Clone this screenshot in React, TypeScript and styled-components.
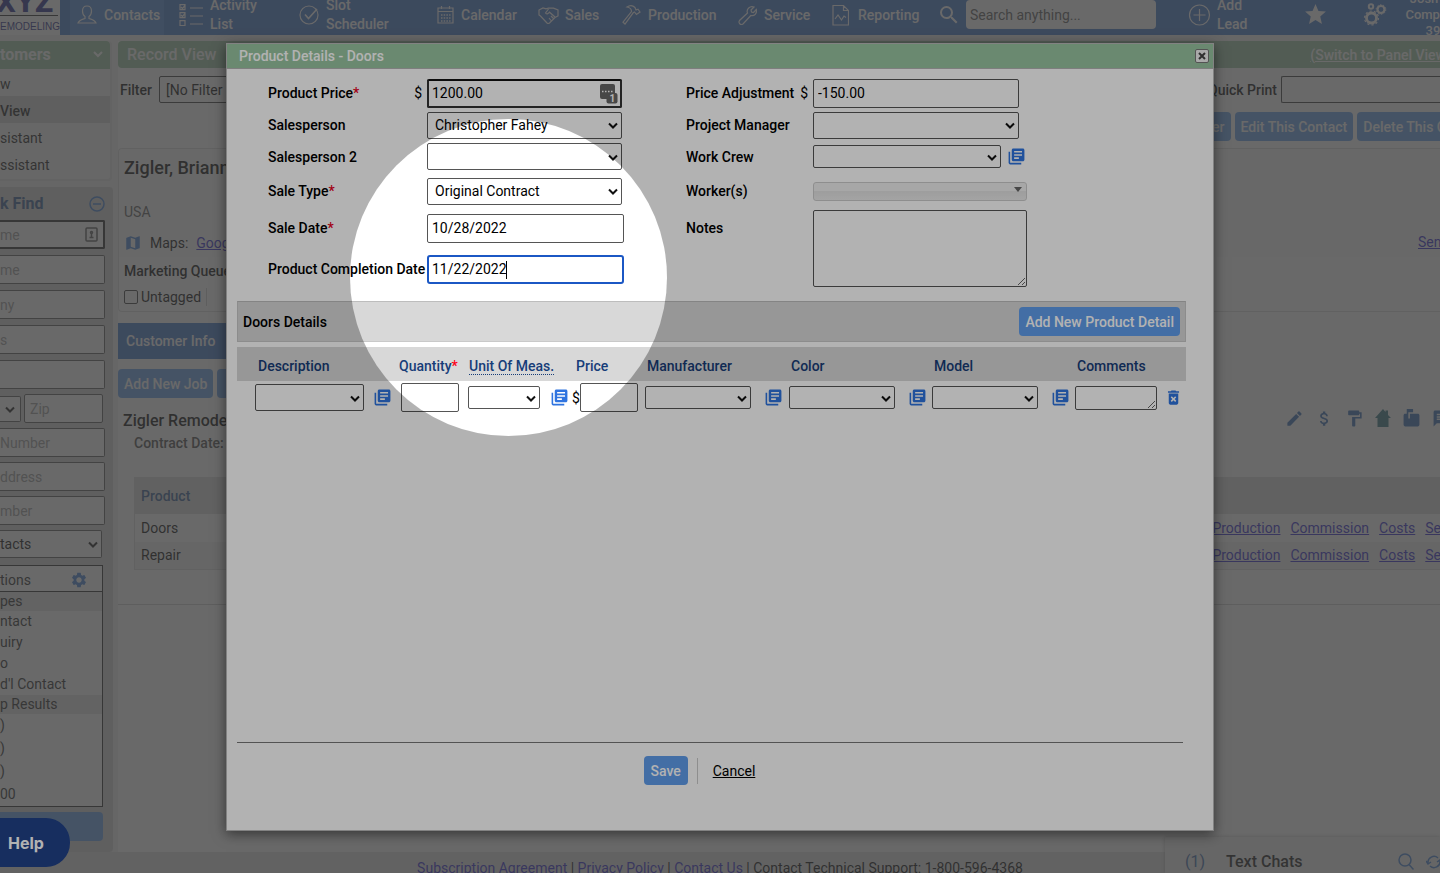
import React from "react";
import styled, { createGlobalStyle, css } from "styled-components";
import {
  MdAttachMoney,
  MdDeleteForever,
  MdEdit,
  MdFormatPaint,
  MdLibraryBooks,
  MdMap,
  MdMarkunreadMailbox,
  MdMessage,
  MdSearch,
  MdSettings,
  MdStar,
} from "react-icons/md";

const GlobalStyle = createGlobalStyle`
  *, *::before, *::after { box-sizing: border-box; }
  body {
    margin: 0;
    background: #efefef;
    color: #000;
    font-family: Roboto, "Liberation Sans", sans-serif;
    font-size: 14px;
    line-height: 18px;
  }
  button, input, select, textarea { font: inherit; color: inherit; margin: 0; }
  svg { display: block; flex: none; }
`;

const Shell = styled.div`
  position: relative;
  height: 100vh;
  overflow: hidden;
`;

/* ---------- top navigation ---------- */

const TopBar = styled.header`
  display: flex;
  align-items: flex-start;
  height: 35px;
  background: #3873cb;
  color: #fff;
  overflow: hidden;
`;

const Logo = styled.a`
  display: flex;
  flex: none;
  width: 60px;
  height: 35px;
  margin-right: 10px;
  background: #fff;
`;

const NavList = styled.nav`
  display: flex;
  flex: none;
  gap: 8px;
`;

const NavItem = styled.a<{ $width: number; $active?: boolean; $gap?: number }>`
  display: flex;
  flex: none;
  align-items: center;
  gap: ${(p) => p.$gap ?? 7}px;
  width: ${(p) => p.$width}px;
  height: 35px;
  padding: 0 0 5px 7px;
  background: ${(p) => (p.$active ? "#4a85d8" : "transparent")};
  color: inherit;
  font-weight: 500;
  line-height: 19px;
  text-decoration: none;
`;

const SearchBox = styled.form`
  display: flex;
  flex: none;
  gap: 5px;
  height: 29px;
  margin-left: 12px;
  align-items: center;
  input {
    width: 190px;
    height: 29px;
    padding: 0 4px;
    border: 0;
    border-radius: 4px;
    background: #fff;
  }
  input::placeholder { color: #555; opacity: 1; }
`;

const TopTools = styled.div`
  display: flex;
  flex: none;
  align-items: center;
  width: 252px;
  height: 29px;
  margin-left: auto;
  font-weight: 500;
  line-height: 19px;
  a {
    display: flex;
    align-items: center;
    gap: 6px;
    color: inherit;
    text-decoration: none;
  }
`;

const ToolSlot = styled.div<{ $width: number }>`
  flex: none;
  width: ${(p) => p.$width}px;
`;

const UserInfo = styled.div`
  flex: none;
  width: 60px;
  font-size: 13px;
  line-height: 16px;
  text-align: center;
`;

/* ---------- sidebar ---------- */

const Columns = styled.div`
  display: flex;
  align-items: flex-start;
  padding-top: 6px;
`;

const Sidebar = styled.aside`
  flex: none;
  width: 113px;
  margin-right: 5px;
`;

const SideMenu = styled.section`
  width: 112px;
  height: 140px;
  margin-bottom: 6px;
  background: #f6f6f6;
  border: 1px solid #e2e2e2;
  border-width: 0 2px 2px 0;
  border-radius: 0 4px 4px 0;
`;

const SideHeading = styled.h2`
  display: flex;
  align-items: center;
  justify-content: space-between;
  height: 28px;
  margin: 0;
  padding-right: 5px;
  border-radius: 0 4px 0 0;
  background: #99c5a1;
  color: #fff;
  font-size: 16px;
  font-weight: 700;
`;

const SideLink = styled.a<{ $selected?: boolean }>`
  display: flex;
  align-items: center;
  height: 27px;
  padding-top: 3px;
  background: ${(p) => (p.$selected ? "#d2d2d2" : "transparent")};
  color: #111;
  font-weight: ${(p) => (p.$selected ? 500 : 400)};
  text-decoration: none;
`;

const QuickFind = styled.section`
  height: 665px;
  padding-right: 8px;
  border-radius: 0 4px 4px 0;
  background: #d2d2d2;
`;

const QuickFindTitle = styled.h2`
  display: flex;
  align-items: center;
  justify-content: space-between;
  height: 33px;
  margin: 0;
  color: #2d568f;
  font-size: 16px;
  font-weight: 700;
`;

const FieldStack = styled.div<{ $gap: number }>`
  display: flex;
  flex-direction: column;
  gap: ${(p) => p.$gap}px;
  margin-bottom: 5px;
`;

const SideInput = styled.input<{ $strong?: boolean }>`
  width: 100%;
  height: 29px;
  padding: 0 4px 0 0;
  border: ${(p) => (p.$strong ? "2px solid #222" : "1px solid #555")};
  border-left: 0;
  border-radius: 0 2px 2px 0;
  background: #fff;
  &::placeholder { color: #999; opacity: 1; }
`;

const InputWithMark = styled.div`
  position: relative;
  svg { position: absolute; right: 7px; top: 7px; }
`;

const ZipRow = styled.div`
  display: grid;
  grid-template-columns: 19px 79px;
  gap: 5px;
  align-items: center;
  input { border-left: 1px solid #555; border-radius: 2px; padding-left: 5px; }
`;

const ResultsBox = styled.div`
  width: 103px;
  height: 242px;
  margin: 7px 0 5px;
  border: 1px solid #222;
  border-left: 0;
  background: #fff;
  color: #222;
`;

const ResultsTitle = styled.div`
  display: flex;
  align-items: center;
  justify-content: space-between;
  height: 26px;
  padding: 3px 14px 0 0;
  border-bottom: 1px solid #222;
`;

const ResultRow = styled.div<{ $band?: boolean; $tall?: boolean }>`
  height: ${(p) => (p.$band ? 19 : p.$tall ? 23 : 21)}px;
  line-height: ${(p) => (p.$band ? 19 : p.$tall ? 23 : 21)}px;
  background: ${(p) => (p.$band ? "#e4e4e4" : "transparent")};
`;

const SideAction = styled.button`
  display: block;
  width: 103px;
  height: 29px;
  border: 0;
  border-radius: 0 4px 4px 0;
  background: #619eec;
`;

/* ---------- record page ---------- */

const Record = styled.main`
  flex: 1;
  min-width: 0;
  height: 811px;
  overflow: hidden;
  background: #fff;
  white-space: nowrap;
`;

const RecordBar = styled.div`
  display: flex;
  align-items: center;
  justify-content: space-between;
  height: 27px;
  padding-left: 9px;
  border-radius: 4px 0 0 4px;
  background: #99c5a1;
  color: #fff;
  h1 { margin: 0; font-size: 16px; font-weight: 500; }
  a { margin-right: -6px; color: inherit; font-weight: 500; }
`;

const FilterRow = styled.div`
  display: flex;
  align-items: center;
  justify-content: space-between;
  height: 43px;
  margin-bottom: 1px;
  padding-left: 2px;
  font-weight: 500;
`;

const Labelled = styled.label`
  display: flex;
  align-items: center;
  gap: 7px;
`;

const FilterSelect = styled.select`
  appearance: none;
  width: 160px;
  height: 27px;
  padding: 0 6px;
  border: 1px solid #333;
  border-radius: 2px;
  background: #fff;
  font-weight: 400;
`;

const PrintBox = styled(Labelled)`
  gap: 4px;
  input {
    width: 159px;
    height: 27px;
    border: 1px solid #333;
    border-right: 0;
    border-radius: 2px 0 0 2px;
    background: #fff;
  }
`;

const ActionRow = styled.div<{ $end?: boolean }>`
  display: flex;
  justify-content: ${(p) => (p.$end ? "flex-end" : "flex-start")};
  gap: 4px;
`;

const PillButton = styled.button<{ $cut?: boolean }>`
  flex: none;
  min-width: 44px;
  height: 29px;
  padding: 0 6px;
  border: 0;
  border-radius: 4px;
  background: #619eec;
  color: #fff;
  font-weight: 500;
  text-align: center;
  ${(p) => p.$cut && "margin-right: -12px;"}
`;

const ContactCard = styled.section`
  display: flex;
  justify-content: space-between;
  height: 164px;
  margin: 7px 0 11px;
  padding: 9px 0 0 5px;
  border: 1px solid #ddd;
  border-right: 0;
  border-radius: 4px 0 0 4px;
  background: linear-gradient(#fafafa 108px, #fff 108px);
  h2 { margin: 0; font-size: 18px; line-height: 20px; font-weight: 500; }
`;

const CardLine = styled.div<{ $height: number; $muted?: boolean; $bold?: boolean }>`
  display: flex;
  align-items: center;
  gap: 8px;
  height: ${(p) => p.$height}px;
  padding-top: ${(p) => (p.$muted ? 18 : 0)}px;
  color: ${(p) => (p.$muted ? "#555" : "#000")};
  font-weight: ${(p) => (p.$bold ? 500 : 400)};
`;

const TextLink = styled.a`
  color: #2a22cc;
`;

const CardSide = styled.div`
  width: 22px;
  padding-top: 75px;
`;

const TagLabel = styled.label`
  display: flex;
  align-items: center;
  gap: 3px;
  padding-right: 5px;
  border-right: 1px solid #ccc;
  input {
    appearance: none;
    width: 14px;
    height: 14px;
    border: 1px solid #333;
    border-radius: 2px;
  }
`;

const InfoTab = styled.button`
  display: block;
  width: 160px;
  height: 36px;
  margin-bottom: 10px;
  padding: 0 8px;
  border: 0;
  background: #3873cb;
  color: #fff;
  font-weight: 500;
  text-align: left;
`;

const JobHead = styled.div`
  display: flex;
  justify-content: space-between;
  height: 79px;
  padding: 10px 0 0 5px;
  h3 { margin: 3px 0 0; font-size: 16px; line-height: 20px; font-weight: 500; }
  p { margin: 3px 0 0 11px; color: #444; font-weight: 500; }
`;

const JobIcons = styled.div`
  display: flex;
  justify-content: space-between;
  align-items: center;
  width: 166px;
  height: 20px;
  margin-right: -11px;
  color: #2c66b4;
`;

const JobTable = styled.table`
  width: calc(100% - 16px);
  margin-left: 16px;
  border-collapse: collapse;
  border: 1px solid #ddd;
  border-right: 0;
  th, td { padding: 0 0 0 6px; text-align: left; }
  th { height: 36px; background: #dedede; color: #2d568f; font-weight: 500; }
  td { height: 28px; }
  tr:nth-child(2) td { background: #f3f3f3; }
`;

const RowLinks = styled.div`
  display: flex;
  justify-content: flex-end;
  gap: 10px;
  margin-right: -1px;
`;

const Rule = styled.hr`
  margin: 34px 0 0;
  border: 0;
  border-top: 1px solid #ccc;
`;

const Footer = styled.footer`
  height: 40px;
  padding-top: 7px;
  background: #e0e0e0;
  text-align: center;
`;

const ChatBar = styled.aside`
  position: absolute;
  right: 0;
  bottom: 0;
  display: flex;
  align-items: center;
  width: 275px;
  height: 36px;
  padding: 13px 0 0 20px;
  background: #f2f2f2;
  box-shadow: 0 0 4px rgba(0, 0, 0, 0.3);
  color: #3565a8;
  font-size: 16px;
  strong { flex: 1; margin-left: 21px; color: #111; font-weight: 500; }
  svg + svg { margin: 0 -2px 0 12px; }
`;

/* ---------- overlays ---------- */

const Backdrop = styled.div`
  position: absolute;
  inset: 0;
  background: rgba(102, 102, 102, 0.68);
`;

const HelpButton = styled.button`
  position: absolute;
  left: 0;
  bottom: 6px;
  width: 70px;
  height: 49px;
  padding: 0 0 0 8px;
  border: 0;
  border-radius: 0 24px 24px 0;
  background: #214289;
  color: #fff;
  font-family: Inter, Roboto, sans-serif;
  font-size: 16px;
  font-weight: 700;
  text-align: left;
`;

const Spotlight = styled.div`
  position: absolute;
  left: 350px;
  top: 119px;
  width: 317px;
  height: 317px;
  border-radius: 50%;
  box-shadow: 0 0 0 2000px rgba(0, 0, 0, 0.3);
  pointer-events: none;
`;

/* ---------- dialog ---------- */

const Dialog = styled.section`
  position: absolute;
  top: 43px;
  right: 226px;
  bottom: 42px;
  left: 226px;
  display: flex;
  flex-direction: column;
  border: 1px solid #bbb;
  background: #fff;
  box-shadow: 0 3px 12px rgba(0, 0, 0, 0.5);
`;

const DialogBar = styled.header`
  display: flex;
  align-items: center;
  justify-content: space-between;
  height: 25px;
  padding: 0 4px 0 12px;
  border-bottom: 1px solid #b5b5b5;
  background: #99c5a1;
  color: #fff;
  h2 { margin: 0; font-size: 14px; font-weight: 500; }
`;

const CloseButton = styled.button`
  display: grid;
  place-items: center;
  width: 14px;
  height: 14px;
  padding: 0;
  border: 1px solid #777;
  border-radius: 2px;
  background: #f2f2f2;
`;

const DialogBody = styled.form`
  display: flex;
  flex: 1;
  flex-direction: column;
  padding: 8px 27px 45px 10px;
`;

const FormGrid = styled.div`
  display: grid;
  grid-template-columns: 159px 259px 127px 1fr;
  grid-template-rows: 32px 32px 31px 38px 36px 46px;
  align-items: center;
  margin-bottom: 9px;
  padding-left: 31px;
`;

const Label = styled.label`
  display: flex;
  justify-content: space-between;
  padding-right: 5px;
  font-weight: 500;
  white-space: nowrap;
  b { font-weight: 500; }
  i { color: #e8001c; font-style: normal; }
  span { font-weight: 400; }
`;

const Control = styled.div`
  display: flex;
  align-items: center;
  gap: 6px;
`;

const boxed = css`
  border: 1px solid #555;
  border-radius: 2px;
  background: transparent;
  outline: 0;
`;

const TextInput = styled.input<{ $width: number; $look?: "strong" | "focus" }>`
  ${boxed}
  width: ${(p) => p.$width}px;
  height: 29px;
  padding: 0 4px;
  ${(p) => p.$look === "strong" && "border: 2px solid #333; border-top-color: #111; padding: 0 3px;"}
  ${(p) => p.$look === "focus" && "border: 2px solid #1b57c4; border-radius: 3px; padding: 0 3px;"}
`;

const Layered = styled.div`
  position: relative;
`;

const ManagerMark = styled.svg`
  position: absolute;
  top: 5px;
  right: 4px;
`;

const Caret = styled.span`
  position: absolute;
  top: 6px;
  left: 79px;
  width: 1px;
  height: 18px;
  background: #000;
`;

const SelectWrap = styled.span<{ $width: number }>`
  position: relative;
  display: block;
  flex: none;
  width: ${(p) => p.$width}px;
  svg { position: absolute; top: 50%; right: 3px; margin-top: -3px; pointer-events: none; }
`;

const SelectBox = styled.select<{ $height: number }>`
  ${boxed}
  appearance: none;
  display: block;
  width: 100%;
  height: ${(p) => p.$height}px;
  padding: 0 20px 0 7px;
`;

const SideSelectWrap = styled(SelectWrap)`
  select { border-left: 0; border-radius: 0 2px 2px 0; padding-left: 0; background: #fff; }
`;

const WorkerPicker = styled.button`
  display: flex;
  justify-content: flex-end;
  width: 214px;
  height: 19px;
  padding: 4px 4px 0 0;
  border: 1px solid #ccc;
  border-radius: 3px;
  background: linear-gradient(#f0f0f0 50%, #e2e2e2 50%, #ebebeb);
`;

const NotesCell = styled.div`
  grid-row: 5 / span 2;
  grid-column: 4;
  align-self: start;
`;

const Area = styled.textarea<{ $width: number; $height: number }>`
  ${boxed}
  display: block;
  width: ${(p) => p.$width}px;
  height: ${(p) => p.$height}px;
  padding: 2px 4px;
  resize: both;
`;

const IconButton = styled.button`
  flex: none;
  padding: 0;
  border: 0;
  background: transparent;
  color: #2f74e0;
`;

const DetailsBar = styled.div`
  display: flex;
  align-items: center;
  justify-content: space-between;
  height: 41px;
  margin-bottom: 5px;
  padding: 0 5px;
  border: 1px solid #c9c9c9;
  border-top-color: #bdbdbd;
  background: #d8d8d8;
  h3 { margin: 0; font-size: 14px; font-weight: 500; }
`;

const DetailTable = styled.table`
  width: 100%;
  table-layout: fixed;
  border-collapse: collapse;
  th, td { padding: 0; text-align: left; white-space: nowrap; }
  th {
    height: 34px;
    padding: 3px 0 0 4px;
    background: #d8d8d8;
    color: #173d78;
    font-weight: 500;
  }
  th:nth-child(2) { padding-left: 0; }
  th:nth-child(3) { padding-left: 3px; }
  td { height: 33px; padding-left: 2px; }
  th:first-child { padding-left: 21px; }
  td:first-child { padding-left: 18px; }
  td:nth-child(4) { padding-left: 0; }
  th i { color: #ff0018; font-style: normal; }
  abbr { text-decoration: none; border-bottom: 1px dotted #173d78; }
`;

const Spread = styled.div<{ $gap?: number }>`
  display: flex;
  align-items: center;
  gap: ${(p) => p.$gap ?? 14}px;
`;

const FooterRule = styled.hr`
  width: calc(100% - 3px);
  margin: auto 3px 0 0;
  border: 0;
  border-top: 1px solid #777;
`;

const DialogFooter = styled.footer`
  display: flex;
  align-items: center;
  justify-content: center;
  gap: 9px;
  padding: 13px 24px 0 0;
`;

const CancelLink = styled.a`
  padding: 4px 0 4px 15px;
  border-left: 1px solid #ccc;
  color: #000;
`;

const Chevron = () => (
  <svg width="12" height="8" viewBox="0 0 12 8" fill="none" stroke="#111" strokeWidth="2">
    <path d="M2 1.500l4 4 4-4" />
  </svg>
);

const Line = ({ size = 20, children }: { size?: number; children: React.ReactNode }) => (
  <svg width={size} height="22" viewBox={`0 0 ${size} 22`} fill="none" stroke="#fff" strokeWidth="1.2">
    {children}
  </svg>
);

function Picker({ label, id, width, height = 27, options = [""] }: {
  label?: string; id?: string; width: number; height?: number; options?: string[];
}) {
  return (
    <SelectWrap $width={width}>
      <SelectBox id={id} aria-label={label} $height={height}>
        {options.map((o) => <option key={o}>{o}</option>)}
      </SelectBox>
      <Chevron />
    </SelectWrap>
  );
}

const Library = ({ label }: { label: string }) => (
  <IconButton type="button" aria-label={label}><MdLibraryBooks size={19} /></IconButton>
);

function Navigation() {
  return (
    <TopBar>
      <Logo href="#home" aria-label="XYZ Remodeling">
        <svg width="60" height="35" viewBox="0 0 60 35" fill="#1c1f86">
          <text x="-4" y="12" fontFamily="DejaVu Sans" fontWeight="700" fontSize="26">XYZ</text>
          <path d="M0 15.500H58" stroke="#222" strokeWidth="1" />
          <text x="0" y="30" fontFamily="Liberation Sans" fontSize="10">EMODELING</text>
        </svg>
      </Logo>
      <NavList>
        <NavItem href="#contacts" $width={94} $active>
          <Line><path d="M10 2c3 0 4.500 2 4.500 5 0 2.500-1 4.500-2.500 5.500v2c3 1 6 1.500 7 4.500H1c1-3 4-3.500 7-4.500v-2C6.500 11.500 5.500 9.500 5.500 7 5.500 4 7 2 10 2z" /></Line>
          Contacts
        </NavItem>
        <NavItem href="#activity" $width={112}>
          <Line size={24}>
            <path d="M1 0.600h5v5H1zM1 8.600h5v5H1zM1 16.600h5v5H1zM2 3l1.500 1.500L6 1.500M2 11l1.500 1.500L6 9.500M11 4h13M11 12h13M11 20h13" />
          </Line>
          <span>Activity<br />List</span>
        </NavItem>
        <NavItem href="#slots" $width={130}>
          <Line><circle cx="10" cy="11" r="9" /><path d="M6 10.500l3.500 4L18 5" strokeWidth="1.600" /></Line>
          <span>Slot<br />Scheduler</span>
        </NavItem>
        <NavItem href="#calendar" $width={93}>
          <Line size={17}>
            <path d="M1 4h15v15H1zM1 7.500h15M4.500 2v3M12.500 2v3" />
            <path d="M4 11h9.500M4 14h9.500M4 17h9.500" strokeDasharray="1.500 1.200" strokeWidth="1.500" />
          </Line>
          Calendar
        </NavItem>
        <NavItem href="#sales" $width={76} $gap={6}>
          <Line size={21}>
            <path d="M1 6l4-2 3 .8 2.500-.8 5 .2L20 6v6l-3 1.500-5.500 5.500c-.8.600-1.800.600-2.500 0L2.500 12 1 11zM10.500 5L7.500 9c1 1.500 2.500 1 4-.8L17 13M13 12l2.500 2.500M11 14l2 2.500" />
          </Line>
          Sales
        </NavItem>
        <NavItem href="#production" $width={108}>
          <Line size={19}>
            <path d="M5 3c3-2 6-1.500 8 .5l1 2.500 2-.8 2 2.800-3.500 2.500-2-2.500-1.300.8L3 20l-2-1.800L9.500 7.500C9.500 5 8 3.500 5 3z" />
          </Line>
          Production
        </NavItem>
        <NavItem href="#service" $width={86}>
          <Line size={19}>
            <path d="M16 3l-3 3 .5 2 2 .5 2.800-3c1 4-2 7-5.500 6L5 20c-2.500 1.500-5-1-3.500-3.500L9.500 9C8 5 12 1.500 16 3z" />
          </Line>
          Service
        </NavItem>
        <NavItem href="#reporting" $width={100} $gap={9}>
          <Line size={17}>
            <path d="M1 1.500h10.500l5 5V21H1zM11.500 1.500v5h5M3 15l3-4 3.500 5 2.500-4 2 1.500" />
          </Line>
          Reporting
        </NavItem>
      </NavList>
      <SearchBox>
        <MdSearch size={24} />
        <input type="search" aria-label="Search" placeholder="Search anything..." />
      </SearchBox>
      <TopTools>
        <ToolSlot $width={115}>
          <a href="#lead">
            <Line size={23}><circle cx="11.500" cy="11" r="10" /><path d="M11.500 5v12M5.500 11h12" /></Line>
            <span>Add<br />Lead</span>
          </a>
        </ToolSlot>
        <ToolSlot $width={60}><a href="#favorites" aria-label="Favorites"><MdStar size={25} /></a></ToolSlot>
        <ToolSlot $width={40}>
          <a href="#settings" aria-label="Settings">
            <svg width="24" height="24" viewBox="0 0 24 24" fill="none" stroke="#fff">
              <circle cx="8.500" cy="15" r="5" strokeWidth="2.800" />
              <circle cx="8.500" cy="15" r="7" strokeWidth="1.200" strokeDasharray="2.200 2.200" />
              <circle cx="18" cy="6.500" r="3.500" strokeWidth="2.200" />
              <circle cx="18" cy="6.500" r="4.800" strokeWidth="1" strokeDasharray="1.500 1.500" />
              <circle cx="8" cy="3.500" r="2.200" strokeWidth="2" />
            </svg>
          </a>
        </ToolSlot>
        <UserInfo>Josh Jo<br />Company<br />39</UserInfo>
      </TopTools>
    </TopBar>
  );
}

function SidePanel() {
  return (
    <Sidebar>
      <SideMenu>
        <SideHeading>
          tomers
          <svg width="14" height="10" viewBox="0 0 14 10" fill="none" stroke="#fff" strokeWidth="2"><path d="M3 2l4 4 4-4" /></svg>
        </SideHeading>
        <SideLink href="#new">w</SideLink>
        <SideLink href="#view" $selected>View</SideLink>
        <SideLink href="#assistant">sistant</SideLink>
        <SideLink href="#assistant2">ssistant</SideLink>
      </SideMenu>
      <QuickFind>
        <QuickFindTitle>
          k Find
          <svg width="16" height="16" viewBox="0 0 16 16" fill="none" stroke="#3f7fd6" strokeWidth="1.500"><circle cx="8" cy="8" r="7" /><path d="M4 8h8" /></svg>
        </QuickFindTitle>
        <FieldStack $gap={6}>
          <InputWithMark>
            <SideInput aria-label="First name" placeholder="me" $strong />
            <svg width="13" height="15" viewBox="0 0 13 15" fill="none" stroke="#555" strokeWidth="1.500"><rect x="1" y="1" width="11" height="13" rx="1" /><circle cx="6.500" cy="5.500" r="1" /><path d="M4.500 10.500h4M6.500 7v3" /></svg>
          </InputWithMark>
          <SideInput aria-label="Last name" placeholder="me" />
          <SideInput aria-label="Company" placeholder="ny" />
          <SideInput aria-label="Address" placeholder="s" />
          <SideInput aria-label="City" />
        </FieldStack>
        <FieldStack $gap={5}>
          <ZipRow>
            <SideSelectWrap $width={19}><SelectBox aria-label="State" $height={26}><option /></SelectBox><Chevron /></SideSelectWrap>
            <SideInput aria-label="Zip" placeholder="Zip" />
          </ZipRow>
          <SideInput aria-label="Phone" placeholder="Number" />
          <SideInput aria-label="Email" placeholder="ddress" />
          <SideInput aria-label="Job" placeholder="mber" />
          <SideSelectWrap $width={102}>
            <SelectBox aria-label="Contacts" $height={28}><option>tacts</option></SelectBox><Chevron />
          </SideSelectWrap>
        </FieldStack>
        <ResultsBox>
          <ResultsTitle>tions <MdSettings size={18} color="#3f7fd6" /></ResultsTitle>
          <ResultRow $band>pes</ResultRow>
          <ResultRow>ntact</ResultRow>
          <ResultRow>uiry</ResultRow>
          <ResultRow>o</ResultRow>
          <ResultRow>d'l Contact</ResultRow>
          <ResultRow $band>p Results</ResultRow>
          <ResultRow $tall>)</ResultRow>
          <ResultRow $tall>)</ResultRow>
          <ResultRow $tall>)</ResultRow>
          <ResultRow $tall>00</ResultRow>
        </ResultsBox>
        <SideAction aria-label="Search" />
      </QuickFind>
    </Sidebar>
  );
}

function RecordPage() {
  return (
    <Record>
      <RecordBar>
        <h1>Record View</h1>
        <a href="#panel">(Switch to Panel View</a>
      </RecordBar>
      <FilterRow>
        <Labelled>Filter<FilterSelect><option>[No Filter</option></FilterSelect></Labelled>
        <PrintBox>Quick Print<input type="text" /></PrintBox>
      </FilterRow>
      <ActionRow $end>
        <PillButton>Filter</PillButton>
        <PillButton>Edit This Contact</PillButton>
        <PillButton $cut>Delete This C</PillButton>
      </ActionRow>
      <ContactCard>
        <div>
          <h2>Zigler, Brianna</h2>
          <CardLine $height={50} $muted>USA</CardLine>
          <CardLine $height={30}>
            <MdMap size={18} color="#3f7fd6" />Maps: <TextLink href="#maps">Google</TextLink>
          </CardLine>
          <CardLine $height={26} $bold>Marketing Queue</CardLine>
          <CardLine $height={25}><TagLabel><input type="checkbox" />Untagged</TagLabel></CardLine>
        </div>
        <CardSide><TextLink href="#send">Sen</TextLink></CardSide>
      </ContactCard>
      <InfoTab>Customer Info</InfoTab>
      <ActionRow><PillButton>Add New Job</PillButton><PillButton>Add</PillButton></ActionRow>
      <JobHead>
        <div><h3>Zigler Remodel</h3><p>Contract Date:</p></div>
        <JobIcons>
          <MdEdit size={19} /><MdAttachMoney size={19} /><MdFormatPaint size={19} />
          <svg width="16" height="18" viewBox="0 0 16 18" fill="#2f7080"><path d="M8 0L10.500 3V1.500H13V6L16 9h-2.500v9h-11V9H0z" /></svg>
          <MdMarkunreadMailbox size={19} /><MdMessage size={19} />
        </JobIcons>
      </JobHead>
      <JobTable>
        <thead><tr><th>Product</th><th /></tr></thead>
        <tbody>
          {["Doors", "Repair"].map((name) => (
            <tr key={name}>
              <td>{name}</td>
              <td>
                <RowLinks>
                  <TextLink href="#production">Production</TextLink>
                  <TextLink href="#commission">Commission</TextLink>
                  <TextLink href="#costs">Costs</TextLink>
                  <TextLink href="#service">Se</TextLink>
                </RowLinks>
              </td>
            </tr>
          ))}
        </tbody>
      </JobTable>
      <Rule />
    </Record>
  );
}

function ProductDialog() {
  return (
    <Dialog role="dialog" aria-labelledby="dialog-title">
      <DialogBar>
        <h2 id="dialog-title">Product Details - Doors</h2>
        <CloseButton aria-label="Close">
          <svg width="8" height="8" viewBox="0 0 8 8" stroke="#444" strokeWidth="2"><path d="M1 1l6 6M7 1L1 7" /></svg>
        </CloseButton>
      </DialogBar>
      <DialogBody>
        <FormGrid>
          <Label htmlFor="price"><b>Product Price<i>*</i></b><span>$</span></Label>
          <Control>
            <Layered>
              <TextInput id="price" $width={195} $look="strong" defaultValue="1200.00" />
              <ManagerMark width="18" height="20" viewBox="0 0 18 20">
                <rect x="0" y="0" width="15" height="15" rx="2" fill="#666" />
                <path d="M2 7.500h11" stroke="#fff" strokeWidth="1.500" strokeDasharray="1.500 1.500" />
                <rect x="6.500" y="9" width="11" height="10.500" rx="2" fill="#666" />
                <text x="9.500" y="18" fontFamily="Roboto" fontSize="10" fontWeight="700" fill="#fff">1</text>
              </ManagerMark>
            </Layered>
          </Control>
          <Label htmlFor="adjustment">Price Adjustment<span>$</span></Label>
          <Control><TextInput id="adjustment" $width={206} defaultValue="-150.00" /></Control>

          <Label htmlFor="salesperson">Salesperson</Label>
          <Control><Picker id="salesperson" width={195} options={["Christopher Fahey"]} /></Control>
          <Label htmlFor="manager">Project Manager</Label>
          <Control><Picker id="manager" width={206} /></Control>

          <Label htmlFor="salesperson2">Salesperson 2</Label>
          <Control><Picker id="salesperson2" width={195} /></Control>
          <Label htmlFor="crew">Work Crew</Label>
          <Control><Picker id="crew" width={188} height={23} /><Library label="Edit work crews" /></Control>

          <Label htmlFor="saletype"><b>Sale Type<i>*</i></b></Label>
          <Control><Picker id="saletype" width={195} options={["Original Contract"]} /></Control>
          <Label htmlFor="workers">Worker(s)</Label>
          <Control>
            <WorkerPicker id="workers" type="button">
              <svg width="8" height="5" viewBox="0 0 8 5" fill="#666"><path d="M0 0h8L4 5z" /></svg>
            </WorkerPicker>
          </Control>

          <Label htmlFor="saledate"><b>Sale Date<i>*</i></b></Label>
          <Control><TextInput id="saledate" $width={197} defaultValue="10/28/2022" /></Control>
          <Label htmlFor="notes">Notes</Label>
          <NotesCell><Area id="notes" $width={214} $height={77} /></NotesCell>

          <Label htmlFor="completion">Product Completion Date</Label>
          <Control>
            <Layered>
              <TextInput id="completion" $width={197} $look="focus" defaultValue="11/22/2022" />
              <Caret />
            </Layered>
          </Control>
        </FormGrid>

        <DetailsBar>
          <h3>Doors Details</h3>
          <PillButton type="button">Add New Product Detail</PillButton>
        </DetailsBar>

        <DetailTable>
          <colgroup>
            <col width="162" /><col width="67" /><col width="106" /><col width="71" />
            <col width="144" /><col width="143" /><col width="143" /><col />
          </colgroup>
          <thead>
            <tr>
              <th>Description</th>
              <th>Quantity<i>*</i></th>
              <th><abbr>Unit Of Meas.</abbr></th>
              <th>Price</th>
              <th>Manufacturer</th>
              <th>Color</th>
              <th>Model</th>
              <th>Comments</th>
            </tr>
          </thead>
          <tbody>
            <tr>
              <td><Spread $gap={9}><Picker label="Description" width={109} /><Library label="Edit descriptions" /></Spread></td>
              <td><TextInput aria-label="Quantity" $width={58} /></td>
              <td><Spread $gap={10}><Picker label="Unit of measure" width={72} height={23} /><Library label="Edit units" /></Spread></td>
              <td><Spread $gap={0}>$<TextInput aria-label="Price" $width={58} /></Spread></td>
              <td><Spread $gap={13}><Picker label="Manufacturer" width={106} height={23} /><Library label="Edit manufacturers" /></Spread></td>
              <td><Spread $gap={13}><Picker label="Color" width={106} height={23} /><Library label="Edit colors" /></Spread></td>
              <td><Spread $gap={13}><Picker label="Model" width={106} height={23} /><Library label="Edit models" /></Spread></td>
              <td>
                <Spread $gap={7}>
                  <Area aria-label="Comments" $width={82} $height={24} />
                  <IconButton type="button" aria-label="Delete row"><MdDeleteForever size={19} /></IconButton>
                </Spread>
              </td>
            </tr>
          </tbody>
        </DetailTable>

        <FooterRule />
        <DialogFooter>
          <PillButton type="button">Save</PillButton>
          <CancelLink href="#cancel">Cancel</CancelLink>
        </DialogFooter>
      </DialogBody>
    </Dialog>
  );
}

export default function App() {
  return (
    <Shell>
      <GlobalStyle />
      <Navigation />
      <Columns>
        <SidePanel />
        <RecordPage />
      </Columns>
      <Footer>
        <TextLink href="#agreement">Subscription Agreement</TextLink> | <TextLink href="#privacy">Privacy Policy</TextLink> |{" "}
        <TextLink href="#contact">Contact Us</TextLink> | Contact Technical Support: 1-800-596-4368
      </Footer>
      <ChatBar>
        (1)<strong>Text Chats</strong>
        <svg width="16" height="18" viewBox="0 0 16 18" fill="none" stroke="#3f7fd6" strokeWidth="1.500"><circle cx="7" cy="7" r="6" /><path d="M11 11.500l4.500 5" /></svg>
        <svg width="16" height="16" viewBox="0 0 16 16" fill="none" stroke="#3f7fd6" strokeWidth="1.500"><path d="M2 9a6 6 0 0 1 10-5M14 7a6 6 0 0 1-10 5M0 7l2 3 3-2M16 9l-2-3-3 2" /></svg>
      </ChatBar>
      <Backdrop />
      <HelpButton>Help</HelpButton>
      <ProductDialog />
      <Spotlight />
    </Shell>
  );
}
